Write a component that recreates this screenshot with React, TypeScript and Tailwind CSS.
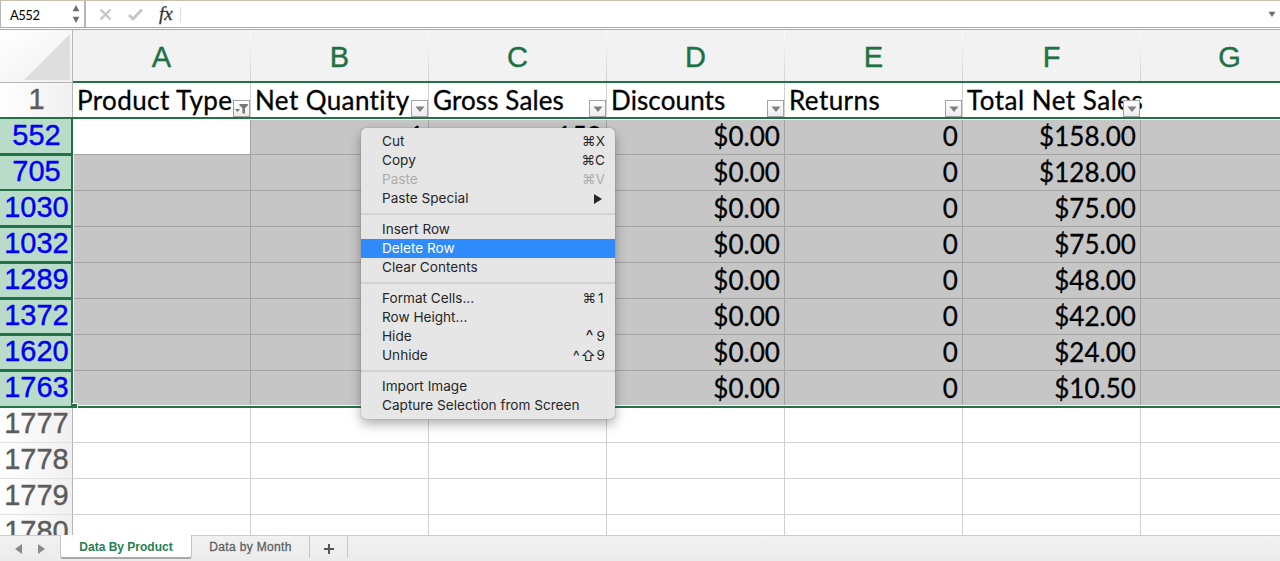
import clsx from "clsx";

const columns = ["A", "B", "C", "D", "E", "F"];

const headers = [
  { label: "Product Type", filtered: true, spacing: "tracking-[0.4px]" },
  { label: "Net Quantity", filtered: false, spacing: "tracking-[0.4px]" },
  { label: "Gross Sales", filtered: false, spacing: "tracking-[0.12px]" },
  { label: "Discounts", filtered: false, spacing: "tracking-[0.12px]" },
  { label: "Returns", filtered: false, spacing: "tracking-[0.42px]" },
  { label: "Total Net Sales", filtered: false, spacing: "tracking-[0.5px]" },
];

const selectedRows = [
  { id: 552, cells: ["", "1", "158", "$0.00", "0", "$158.00"] },
  { id: 705, cells: ["", "", "", "$0.00", "0", "$128.00"] },
  { id: 1030, cells: ["", "", "", "$0.00", "0", "$75.00"] },
  { id: 1032, cells: ["", "", "", "$0.00", "0", "$75.00"] },
  { id: 1289, cells: ["", "", "", "$0.00", "0", "$48.00"] },
  { id: 1372, cells: ["", "", "", "$0.00", "0", "$42.00"] },
  { id: 1620, cells: ["", "", "", "$0.00", "0", "$24.00"] },
  { id: 1763, cells: ["", "", "", "$0.00", "0", "$10.50"] },
];

const emptyRows = [1777, 1778, 1779, 1780];

type Item = { label: string; mods?: string; keyName?: string; disabled?: boolean; active?: boolean; submenu?: boolean };

const menu: Item[][] = [
  [
    { label: "Cut", mods: "⌘", keyName: "X" },
    { label: "Copy", mods: "⌘", keyName: "C" },
    { label: "Paste", mods: "⌘", keyName: "V", disabled: true },
    { label: "Paste Special", submenu: true },
  ],
  [{ label: "Insert Row" }, { label: "Delete Row", active: true }, { label: "Clear Contents" }],
  [
    { label: "Format Cells...", mods: "⌘", keyName: "1" },
    { label: "Row Height..." },
    { label: "Hide", mods: "^", keyName: "9" },
    { label: "Unhide", mods: "^⇧", keyName: "9" },
  ],
  [{ label: "Import Image" }, { label: "Capture Selection from Screen" }],
];

function FormulaBar() {
  return (
    <div className="flex h-[30px] items-stretch border-t border-b border-t-[#c9c1ae] border-b-[#a9a9a9] bg-white">
      <div className="mb-px flex w-full border-b border-[#a9a9a9]">
        <div className="flex w-[86px] shrink-0 items-center justify-between border-r-2 border-l border-[#b5b5b5] pr-1 pl-[9px]">
          <span className="mt-0.5 font-['Lato',sans-serif] text-[13px] leading-none tracking-[-0.5px] text-black">A552</span>
          <svg width="8" height="20" viewBox="0 0 8 20" fill="#6e6e6e">
            <path d="M4 1 7.4 7.2H.6zM4 19 .6 12.8h6.8z" />
          </svg>
        </div>
        <svg className="mt-[7px] ml-[13px] shrink-0" width="13" height="13" viewBox="0 0 13 13" stroke="#c6c6c6" strokeWidth="2.4">
          <path d="M1.5 1.5 11.5 11.5M11.5 1.5 1.5 11.5" />
        </svg>
        <svg className="mt-[7px] ml-4 shrink-0" width="15" height="13" viewBox="0 0 15 13" fill="none" stroke="#c6c6c6" strokeWidth="2.8">
          <path d="M1 7 5 11 14 1.5" />
        </svg>
        <span className="ml-4 w-4 font-['Liberation_Serif',serif] text-[19px] leading-[26px] text-[#333] italic [-webkit-text-stroke:0.3px_#333]">
          fx
        </span>
        <div className="mt-[6px] ml-[5px] h-[15px] w-px bg-[#dedede]" />
        <svg className="mt-[10px] mr-1 ml-auto" width="8" height="7" viewBox="0 0 8 7" fill="#6b6b6b">
          <path d="M.5.8h7L4 6z" />
        </svg>
      </div>
    </div>
  );
}

function FilterButton({ filtered }: { filtered: boolean }) {
  return (
    <span className="absolute right-0 bottom-0 flex h-[17px] w-[17px] items-center justify-center border border-[#a3a3a3] bg-gradient-to-b from-white to-[#ececec]">
      {filtered ? (
        <svg width="13" height="11" viewBox="0 0 13 11" fill="#767676">
          <path d="M0 6h5L2.5 9zM4.5 1h8.3v1.5L10 5v5.5H7.4V5L4.5 2.5z" />
        </svg>
      ) : (
        <svg className="mt-0.5" width="10" height="7" viewBox="0 0 10 7" fill="#808080">
          <path d="M.4.5h9.2L5 6z" />
        </svg>
      )}
    </span>
  );
}

function ColumnHeads() {
  return (
    <div className="flex h-[53px] font-['Liberation_Sans',sans-serif] text-[29px] leading-[54px] text-[#1e7145] [-webkit-text-stroke:0.4px_#1e7145]">
      <div className="flex w-[73px] items-end justify-end border-r border-b border-[#b5b5b5] bg-gradient-to-br from-white to-[#f0f0f0] pr-0.5 pb-[2px]">
        <svg width="46" height="46" viewBox="0 0 46 46" fill="#dedede">
          <path d="M46 0V46H0z" />
        </svg>
      </div>
      {columns.map((c) => (
        <div key={c} className="flex w-[178px] border-b-2 border-[#217346] bg-[#f2f2f2]">
          <span className="flex-1 text-center">{c}</span>
          <div className="w-px bg-gradient-to-b from-white to-[#cfcfcf]" />
        </div>
      ))}
      <div className="w-[139px] border-b-2 border-[#217346] bg-[#f2f2f2] pl-[38px] text-center">G</div>
    </div>
  );
}

function HeaderRow() {
  return (
    <div className="flex h-9 border-b-2 border-[#217346]">
      <div className="w-[73px] border-r border-[#b5b5b5] bg-gradient-to-r from-white to-[#f0f0f0] pl-px text-center font-['Liberation_Sans',sans-serif] text-[29px] leading-[32px] text-[#5c5c5c] [-webkit-text-stroke:0.4px_#5c5c5c]">
        1
      </div>
      {headers.map((h) => (
        <div
          key={h.label}
          className={clsx(
            "relative w-[178px] border-r pl-1 leading-[34px] whitespace-nowrap [-webkit-text-stroke:0.3px_black]",
            h.label === "Total Net Sales" ? "border-transparent" : "border-[#d0d0d0]",
            h.spacing,
          )}
        >
          {h.label}
          <FilterButton filtered={h.filtered} />
        </div>
      ))}
    </div>
  );
}

function SelectedRows() {
  return (
    <div className="relative">
      {selectedRows.map((row, i) => {
        const last = i === selectedRows.length - 1;
        return (
          <div key={row.id} className={clsx("flex", last ? "h-[37px]" : "h-9")}>
            <div
              className={clsx(
                "w-[73px] border-r-2 border-b-2 border-[#217346] bg-[#b9dcc8] pl-0.5 text-center font-['Liberation_Sans',sans-serif] text-[29px] leading-[31px] text-[#0000f5] [-webkit-text-stroke:0.4px_#0000f5]",
                i > 0 && i !== 2 && "border-t",
                (i === 0 || i === 2) && "pt-px",
              )}
            >
              {row.id}
            </div>
            <div
              className={clsx(
                "flex flex-1 border-l border-l-white",
                i === 0 && "border-t border-t-white",
                last && "border-b-2 border-b-[#217346]",
              )}
            >
              <div className={clsx("flex flex-1", last && "border-b border-white")}>
                {row.cells.map((cell, j) => (
                  <div
                    key={j}
                    className={clsx(
                      "border-r border-[#a3a3a3] pr-1 text-right tracking-[0.05px] [-webkit-text-stroke:0.3px_black]",
                      j === 0 ? "w-[177px]" : "w-[178px]",
                      i === 0 ? "leading-[32px]" : "leading-[34px]",
                      i === 0 && j === 0 ? "bg-white" : "bg-[#c6c6c6]",
                      !last && "border-b",
                    )}
                  >
                    {cell}
                  </div>
                ))}
                <div className={clsx("flex-1 border-[#a3a3a3] bg-[#c6c6c6]", !last && "border-b")} />
              </div>
            </div>
          </div>
        );
      })}
      {/* fill handle */}
      <div className="absolute bottom-0 left-[72px] h-[5px] w-[6px] border-t border-r border-white bg-[#217346]" />
    </div>
  );
}

function EmptyRows() {
  return (
    <div className="h-[127px] overflow-hidden">
      {emptyRows.map((id, i) => (
        <div key={id} className={clsx("flex", i === 0 ? "h-[35px]" : "h-9")}>
          <div
            className={clsx(
              "w-[73px] border-r border-b border-r-[#b5b5b5] border-b-[#e2e2e2] bg-gradient-to-r from-white to-[#f0f0f0] pl-px text-center font-['Liberation_Sans',sans-serif] text-[29px] text-[#5c5c5c] [-webkit-text-stroke:0.4px_#5c5c5c]",
              i === 0 ? "leading-[30px]" : "leading-[32px]",
            )}
          >
            {id}
          </div>
          {columns.map((c) => (
            <div key={c} className="w-[178px] border-r border-b border-[#d0d0d0]" />
          ))}
          <div className="flex-1 border-b border-[#d0d0d0]" />
        </div>
      ))}
    </div>
  );
}

function SheetTabs() {
  return (
    <div className="flex h-[26px] border-t border-[#cdcdcd] bg-gradient-to-b from-[#f1f1f1] to-[#ebebeb] font-['Liberation_Sans',sans-serif] text-[12px] leading-[22px]">
      <div className="flex w-[60px] gap-4 pt-2 pl-[15px]">
        <svg width="7" height="10" viewBox="0 0 7 10" fill="#8a8a8a">
          <path d="M7 0V10L0 5z" />
        </svg>
        <svg width="7" height="10" viewBox="0 0 7 10" fill="#8a8a8a">
          <path d="M0 0V10L7 5z" />
        </svg>
      </div>
      <div className="-mt-px h-[24px] w-[132px] rounded-b-[3px] border-r border-b-2 border-l border-x-[#c4c4c4] border-b-[#a9a9a9] bg-white pt-px text-center font-bold text-[#258150]">
        Data By Product
      </div>
      <div className="h-[22px] w-[118px] border-r border-[#c8c8c8] text-center tracking-[0.35px] text-[#5f5f5f] [-webkit-text-stroke:0.3px_#5f5f5f]">
        Data by Month
      </div>
      <div className="flex h-[22px] w-[38px] items-center justify-center border-r border-[#c8c8c8] pt-[3px]">
        <svg width="10" height="10" viewBox="0 0 10 10" stroke="#555" strokeWidth="2">
          <path d="M5 0v10M0 5h10" />
        </svg>
      </div>
    </div>
  );
}

function ContextMenu() {
  return (
    <div className="absolute top-[128px] left-[361px] w-[254px] rounded-[5px] bg-[#e6e6e6] py-1 font-['Inter',sans-serif] text-[13.6px] leading-[19px] text-[#262626] shadow-[0_5px_12px_rgba(0,0,0,0.32),0_0_1px_rgba(0,0,0,0.5)]">
      {menu.map((group, i) => (
        <div key={group[0].label}>
          {i > 0 && (
            <div className="h-3 pt-[5px]">
              <div className="h-0.5 bg-[#d3d3d3]" />
            </div>
          )}
          {group.map((item) => (
            <div
              key={item.label}
              className={clsx(
                "flex h-[19px] items-center justify-between pr-[10px] pl-[21px] whitespace-nowrap",
                item.active && "bg-[#2f8bfb] text-white",
                item.disabled && "text-[#adadad]",
              )}
            >
              <span>{item.label}</span>
              {item.keyName && (
                <span className="flex">
                  <span
                    className={clsx(
                      item.mods === "^" && "mr-[3px] text-[17px]",
                      item.mods === "^⇧" && "text-[15px] tracking-[0.7px]",
                    )}
                  >
                    {item.mods}
                  </span>
                  <span className={clsx(item.keyName === "1" && "w-[9px] pl-0.5")}>{item.keyName}</span>
                </span>
              )}
              {item.submenu && (
                <svg className="mr-[3px]" width="8" height="10" viewBox="0 0 8 10" fill="#262626">
                  <path d="M0 0V10L8 5z" />
                </svg>
              )}
            </div>
          ))}
        </div>
      ))}
    </div>
  );
}

export default function App() {
  return (
    <div className="relative h-[561px] w-[1280px] overflow-hidden bg-white font-['Lato',sans-serif] text-[26px] text-black">
      <FormulaBar />
      <ColumnHeads />
      <HeaderRow />
      <SelectedRows />
      <EmptyRows />
      <SheetTabs />
      <ContextMenu />
    </div>
  );
}
